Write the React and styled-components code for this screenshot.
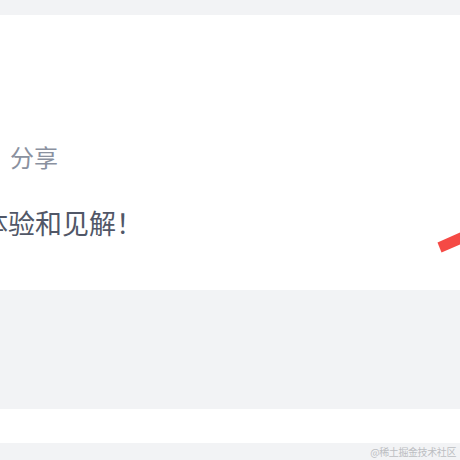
import React from "react";
import styled, { createGlobalStyle } from "styled-components";

const Global = createGlobalStyle`
  html, body { margin: 0; padding: 0; background: #f2f3f5; }
  body { font-family: "Noto Sans CJK SC", "Noto Sans", sans-serif; }
`;

const Page = styled.div`
  width: 460px;
  height: 460px;
  display: flex;
  flex-direction: column;
  overflow: hidden;
`;

const Band = styled.div`
  flex: 0 0 ${(p) => p.$h}px;
  background: ${(p) => (p.$white ? "#ffffff" : "#f2f3f5")};
`;

const Card = styled.div`
  flex: 0 0 275px;
  background: #ffffff;
  position: relative;
  overflow: hidden;
  display: flex;
  flex-direction: column;
  padding-top: 130px;
  box-sizing: border-box;
`;

const Meta = styled.div`
  font-size: 24px;
  line-height: 24px;
  color: #8a919f;
  white-space: nowrap;
  margin-left: 10px;
`;

const Headline = styled.div`
  margin-top: 40px;
  font-size: 27px;
  line-height: 27px;
  color: #515767;
  white-space: nowrap;
  margin-left: -19px;
`;

const Stroke = styled.svg`
  position: absolute;
  right: 0;
  top: 215px;
  width: 24px;
  height: 26px;
`;

const Footer = styled.div`
  flex: 1 1 auto;
  background: #f2f3f5;
  display: flex;
  justify-content: flex-end;
  align-items: center;
  padding-right: 4px;
  font-size: 10px;
  letter-spacing: -0.4px;
  color: #bcbec2;
`;

export default function App() {
  return (
    <Page>
      <Global />
      <Band $h={15} />
      <Card>
        <Meta>分享</Meta>
        <Headline>体验和见解！</Headline>
        <Stroke viewBox="436 230 24 26">
          <polygon points="437.5,242.5 460,232.5 460,244.5 441.5,252.5" fill="#f54a45" />
        </Stroke>
      </Card>
      <Band $h={119} />
      <Band $h={34} $white />
      <Footer>@稀土掘金技术社区</Footer>
    </Page>
  );
}
